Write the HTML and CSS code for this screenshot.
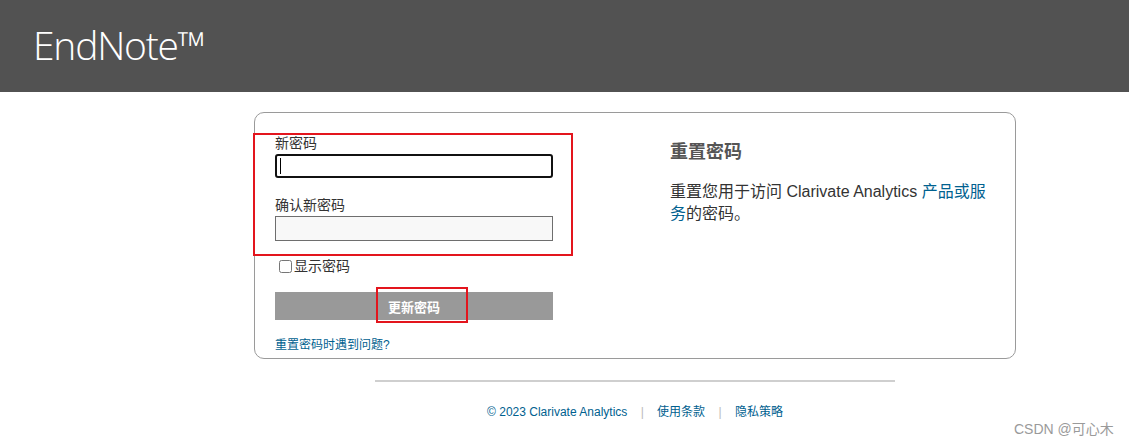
FILE: index.html
```html
<!DOCTYPE html>
<html lang="zh-CN">
<head>
    <meta charset="UTF-8">
    <meta name="viewport" content="width=device-width, initial-scale=1.0">
    <title>重置密码 - EndNote</title>
    <link rel="stylesheet" href="styles.css">
</head>
<body>
    <header class="topbar">
        <div class="brand">EndNote™</div>
    </header>

    <div class="page">
        <div class="card">
            <form class="reset-form" onsubmit="return false">
                <label class="field-label" for="pw1">新密码</label>
                <div class="field-wrap">
                    <input id="pw1" class="field focused" type="password">
                    <span class="caret"></span>
                </div>

                <label class="field-label second" for="pw2">确认新密码</label>
                <div class="field-wrap">
                    <input id="pw2" class="field" type="password">
                </div>

                <label class="show-pw"><input type="checkbox">显示密码</label>

                <button class="submit" type="submit">更新密码</button>

                <a class="help-link" href="#">重置密码时遇到问题?</a>
            </form>

            <div class="side">
                <h2>重置密码</h2>
                <p>重置您用于访问 Clarivate Analytics <a href="#">产品或服</a><br><a href="#">务</a>的密码。</p>
            </div>
        </div>

        <footer class="footer">
            <span>© 2023 Clarivate Analytics</span>
            <span class="sep">|</span>
            <a href="#">使用条款</a>
            <span class="sep">|</span>
            <a href="#">隐私策略</a>
        </footer>
    </div>

    <!-- annotation boxes from the screenshot -->
    <div class="mark mark-fields"></div>
    <div class="mark mark-button"></div>

    <div class="watermark">CSDN @可心木</div>
</body>
</html>
```

FILE: styles.css
```css
body {
    margin: 0;
    font-family: "Liberation Sans", Arial, "Noto Sans CJK SC", sans-serif;
    color: #333;
    background: #fff;
}
a {
    color: #00618f;
    text-decoration: none;
}
.topbar {
    height: 92px;
    background-color: #525252;
    display: flex;
    align-items: center;
}
.brand {
    margin-left: 33px;
    margin-top: -4px;
    color: #fff;
    font-family: "Open Sans", "Noto Sans", sans-serif;
    font-weight: 300;
    font-size: 39px;
    letter-spacing: -1.2px;
}
.page {
    width: 762px;
    margin-left: 254px;
    padding-top: 20px;
}
.card {
    box-sizing: border-box;
    height: 247px;
    border: 1px solid #9a9a9a;
    border-radius: 10px;
    display: flex;
    padding: 20px 0 0 20px;
}
.reset-form {
    width: 278px;
    display: flex;
    flex-direction: column;
    align-items: flex-start;
}
.field-label {
    font-size: 14px;
    line-height: 20px;
    color: #333;
}
.field-label.second {
    margin-top: 17px;
}
.field-wrap {
    position: relative;
    width: 278px;
    margin-top: 1px;
}
.field {
    box-sizing: border-box;
    display: block;
    width: 278px;
    height: 25px;
    margin: 0;
    border: 1px solid #6e6e6e;
    background: #f8f8f8;
    font-size: 14px;
}
.field.focused {
    height: 24px;
    border: 2px solid #111;
    border-radius: 3px;
    background: #fff;
    outline: none;
}
.caret {
    position: absolute;
    left: 5px;
    top: 4px;
    width: 1px;
    height: 16px;
    background: #000;
}
.show-pw {
    margin-top: 15px;
    font-size: 14px;
    line-height: 20px;
    display: flex;
    align-items: center;
}
.show-pw input {
    margin: 0 2px 0 4px;
    width: 13px;
    height: 13px;
}
.submit {
    margin-top: 16px;
    width: 278px;
    height: 28px;
    border: none;
    background-color: #999;
    color: #fff;
    font-family: inherit;
    font-size: 13px;
    font-weight: bold;
    cursor: pointer;
}
.help-link {
    margin-top: 17px;
    font-size: 12px;
    line-height: 16px;
}
.side {
    margin-left: 117px;
    width: 330px;
}
.side h2 {
    margin: 8px 0 0;
    font-size: 18px;
    line-height: 22px;
    color: #555;
}
.side p {
    margin: 18px 0 0;
    font-size: 16px;
    line-height: 22px;
    color: #333;
}
.footer {
    width: 520px;
    margin: 21px 0 0 121px;
    border-top: 2px solid #cfcfcf;
    padding-top: 20px;
    text-align: center;
    font-size: 12px;
    color: #00618f;
}
.footer .sep {
    color: #bbb;
    margin: 0 10px;
}
.mark {
    position: absolute;
    box-sizing: border-box;
    border: 2px solid #e3151d;
}
.mark-fields {
    left: 253px;
    top: 133px;
    width: 320px;
    height: 123px;
}
.mark-button {
    left: 376px;
    top: 287px;
    width: 92px;
    height: 36px;
}
.watermark {
    position: absolute;
    left: 1014px;
    top: 418px;
    font-size: 14px;
    color: #9a9a9a;
}
```
